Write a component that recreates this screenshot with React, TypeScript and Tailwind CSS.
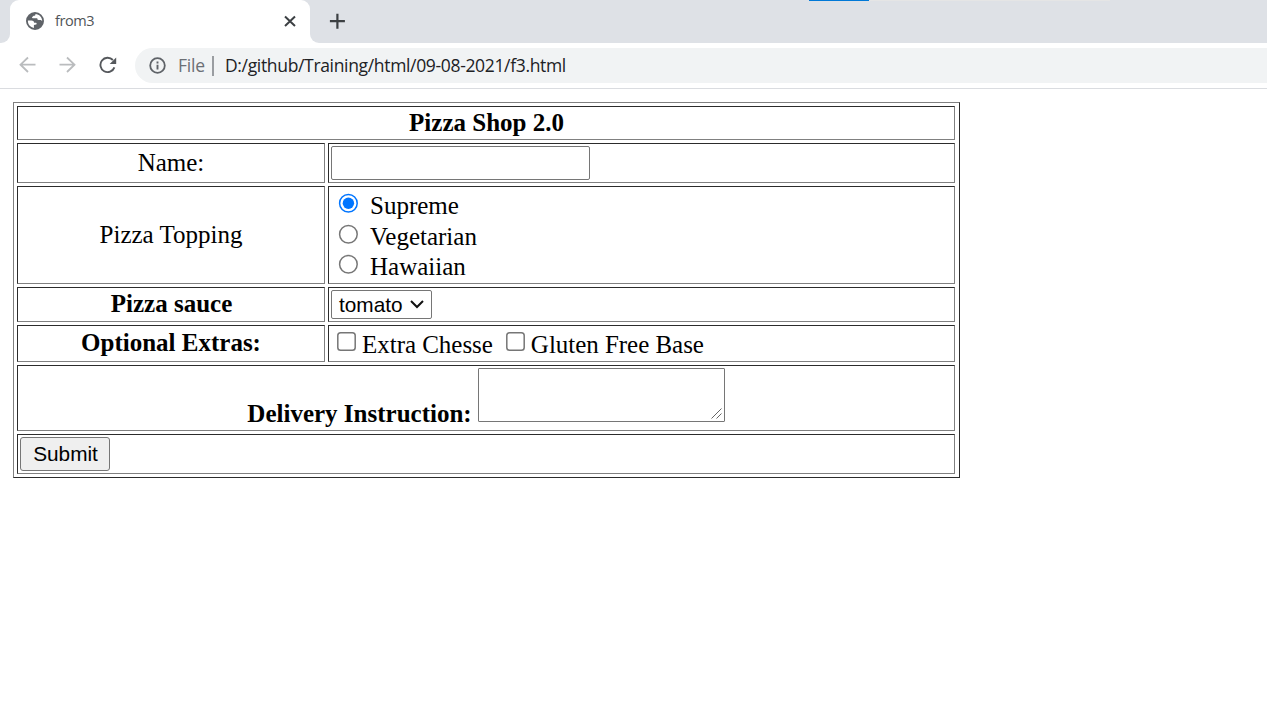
import React from "react";

const cell =
  "flex border border-t-[#2c2c2c] border-l-[#2c2c2c] border-r-[#808080] border-b-[#808080]";
const left = "w-[308px] shrink-0 justify-center";
const right = "w-[627px] shrink-0";

function Tab() {
  return (
    <div className="flex h-[43px] bg-[#dee1e6]">
      <div className="w-[10px] bg-white">
        <div className="h-full rounded-br-[9px] bg-[#dee1e6]" />
      </div>
      <div className="flex w-[300px] items-start rounded-t-[9px] bg-white">
        <svg className="mt-[9px] ml-[13px] h-6 w-6 shrink-0" viewBox="0 0 24 24" fill="#5f6368">
          <path
            fillRule="evenodd"
            d="M12 3a9 9 0 1 0 0 18 9 9 0 0 0 0-18zm7.2 9.2c-.5-.8-1.200-1.300-2.200-1.300h-1.500c-.8 0-1.200-.5-1.200-1.200V9.200H9.800c-.9 0-1-.7-.5-1.200l1-1c.4-.4 1.100-.2 1.600-.5.6-.3.6-.9.500-1.600 3.900.2 6.800 3.400 6.800 7.300zM4.900 11.500c1.600.1 3.400 0 4.600.2 1.200.2 1.500 1.100 1.700 2.100h1.800c.8 0 .9 1.500.1 1.800l-2.200.4v2.900c-3.500-.5-6.200-3.500-6-7.400z"
          />
        </svg>
        <span className="ml-[8px] mt-[11px] w-[220px] font-['Open_Sans',sans-serif] text-[14.500px] leading-[20px] font-normal tracking-[-0.4px] text-[#505458]">
          from3
        </span>
        <svg className="mt-[15px] ml-[9px] h-3 w-3 shrink-0" viewBox="0 0 12 12" stroke="#3c4043" strokeWidth="2">
          <path d="M1 1.500 11 11M11 1.500 1 11" />
        </svg>
      </div>
      <div className="flex flex-1 bg-white">
        <div className="flex flex-1 rounded-bl-[9px] bg-[#dee1e6]">
          <svg className="mt-[13px] ml-[19px] h-4 w-4" viewBox="0 0 16 16" stroke="#3c4043" strokeWidth="2.200">
            <path d="M8.400 .7v15M.9 8.200h15" />
          </svg>
          <div className="ml-[464px] flex h-px w-[301px] bg-[#e5e5e5]">
            <div className="w-[60px] bg-[#0078d7]" />
          </div>
        </div>
      </div>
    </div>
  );
}

function Toolbar() {
  return (
    <div className="flex h-[46px] border-b border-[#dadce0] bg-white pt-[5px]">
      <svg className="mt-[8px] ml-[19px] h-[18px] w-[17px]" viewBox="0 0 17 18" fill="none" stroke="#babcbe" strokeWidth="1.800">
        <path d="M16.500 8.700H1.500M9 1.500 1.500 8.700 9 16" />
      </svg>
      <svg className="mt-[8px] ml-[23px] h-[18px] w-[17px]" viewBox="0 0 17 18" fill="none" stroke="#babcbe" strokeWidth="1.800">
        <path d="M.5 8.700h15M8 1.500l7.500 7.200L8 16" />
      </svg>
      <svg className="mt-[8px] ml-[23px] h-[18px] w-[18px]" viewBox="0 0 18 18" fill="none">
        <path d="M13.900 4A7.200 7.200 0 1 0 15.400 11.400" stroke="#55585c" strokeWidth="1.900" />
        <path d="M17.200 1.500v6.500h-6.500z" fill="#55585c" />
      </svg>
      <div className="ml-[18px] flex h-[35px] flex-1 rounded-l-full bg-[#f1f3f4]">
        <svg className="mt-[9px] ml-[14px] h-[17px] w-[17px] shrink-0" viewBox="0 0 17 17" fill="none" stroke="#5f6368">
          <circle cx="8.500" cy="8.500" r="7.300" strokeWidth="1.800" />
          <path d="M8.500 7.700v4.700M8.500 4.500v1.900" strokeWidth="1.900" />
        </svg>
        <span className="mt-[5px] ml-[12px] w-[34px] font-['Open_Sans',sans-serif] text-[17.500px] leading-[24px] tracking-[-0.2px] text-[#6b6f74]">
          File
        </span>
        <div className="mt-[8px] h-5 w-[2px] bg-[#9a9da1]" />
        <span className="mt-[5px] ml-[11px] font-['Open_Sans',sans-serif] text-[17.500px] leading-[24px] tracking-[-0.335px] whitespace-nowrap text-[#202124]">
          D:/github/Training/html/09-08-2021/f3.html
        </span>
      </div>
    </div>
  );
}

function Radio({ label, checked = false }: { label: string; checked?: boolean }) {
  return (
    <label className="flex h-[30.500px]">
      <svg className="mt-[2px] h-5 w-5" viewBox="0 0 20 20" fill="#fff">
        <circle cx="10.400" cy="10.300" r="8.800" stroke={checked ? "#0075ff" : "#767676"} strokeWidth="1.500" />
        {checked && <circle cx="10.400" cy="10.300" r="5.700" fill="#0075ff" />}
      </svg>
      <span className="ml-[12px] pt-[1px]">{label}</span>
    </label>
  );
}

function Check({ label }: { label: string }) {
  return (
    <label className="flex">
      <svg className="mt-[1px] h-[19px] w-[19px]" viewBox="0 0 19 19" fill="#fff">
        <rect x=".8" y=".8" width="17.400" height="17.400" rx="2.800" stroke="#767676" strokeWidth="1.500" />
      </svg>
      <span className="ml-[6px] tracking-[-0.03px] whitespace-nowrap">{label}</span>
    </label>
  );
}

function PizzaForm() {
  return (
    <form className="mt-[13px] ml-[13px] flex h-[376px] w-[947px] flex-col gap-[3px] border border-t-[#808080] border-r-[#2c2c2c] border-b-[#2c2c2c] border-l-[#808080] p-[3px] font-['Liberation_Serif',serif] text-[25px] leading-[28px] text-black">
      <div className={`${cell} h-[34px] w-[938px] justify-center pt-[2px] pl-px font-bold`}>Pizza Shop 2.0</div>
      <div className="flex h-[40px] gap-[3px]">
        <div className={`${cell} ${left} pt-[5px]`}>Name:</div>
        <div className={`${cell} ${right} p-[2px]`}>
          <input type="text" className="h-[34px] w-[259px] rounded-[2px] border border-[#767676]" />
        </div>
      </div>
      <div className="flex h-[98px] gap-[3px]">
        <div className={`${cell} ${left} pt-[34px]`}>Pizza Topping</div>
        <div className={`${cell} ${right} flex-col pt-[4px] pl-[9px]`}>
          <Radio label="Supreme" checked />
          <Radio label="Vegetarian" />
          <Radio label="Hawaiian" />
        </div>
      </div>
      <div className="flex h-[35px] gap-[3px]">
        <div className={`${cell} ${left} pt-[2px] pl-px font-bold`}>Pizza sauce</div>
        <div className={`${cell} ${right} p-[2px]`}>
          <div className="flex h-[29px] w-[101px] rounded-[2px] border border-[#767676] pl-[7px] font-['Liberation_Sans',sans-serif] text-[20.800px] leading-[27px]">
            tomato
            <svg className="mt-[8px] ml-[7px] h-[10px] w-[15px]" viewBox="0 0 15 10" fill="none" stroke="#111" strokeWidth="2">
              <path d="M1 2 7 8 13 2" />
            </svg>
          </div>
        </div>
      </div>
      <div className="flex h-[37px] gap-[3px]">
        <div className={`${cell} ${left} pt-[3px] font-bold`}>Optional Extras:</div>
        <div className={`${cell} ${right} gap-[13px] pt-[5px] pl-[8px]`}>
          <Check label="Extra Chesse" />
          <Check label="Gluten Free Base" />
        </div>
      </div>
      <div className={`${cell} h-[66px] w-[938px] justify-center pt-[2px] font-bold`}>
        <span className="pt-[32px]">Delivery Instruction:</span>
        <div className="ml-[6px] flex h-[54px] w-[247px] items-end justify-end rounded-[1px] border border-[#767676]">
          <svg className="mr-[2px] mb-[2px] h-[11px] w-[11px]" viewBox="0 0 11 11" stroke="#666" strokeWidth="1">
            <path d="M.5 10.500 10.500 .5M5.500 10.500l5-5" />
          </svg>
        </div>
      </div>
      <div className={`${cell} h-[40px] w-[938px] p-[2px]`}>
        <button type="button" className="h-[34px] w-[90px] rounded-[3px] border border-[#767676] bg-[#efefef] pl-px font-['Liberation_Sans',sans-serif] text-[20.800px] leading-[32px]">
          Submit
        </button>
      </div>
    </form>
  );
}

export default function App() {
  return (
    <div className="h-[711px] w-[1267px] overflow-hidden bg-white">
      <Tab />
      <Toolbar />
      <PizzaForm />
    </div>
  );
}
